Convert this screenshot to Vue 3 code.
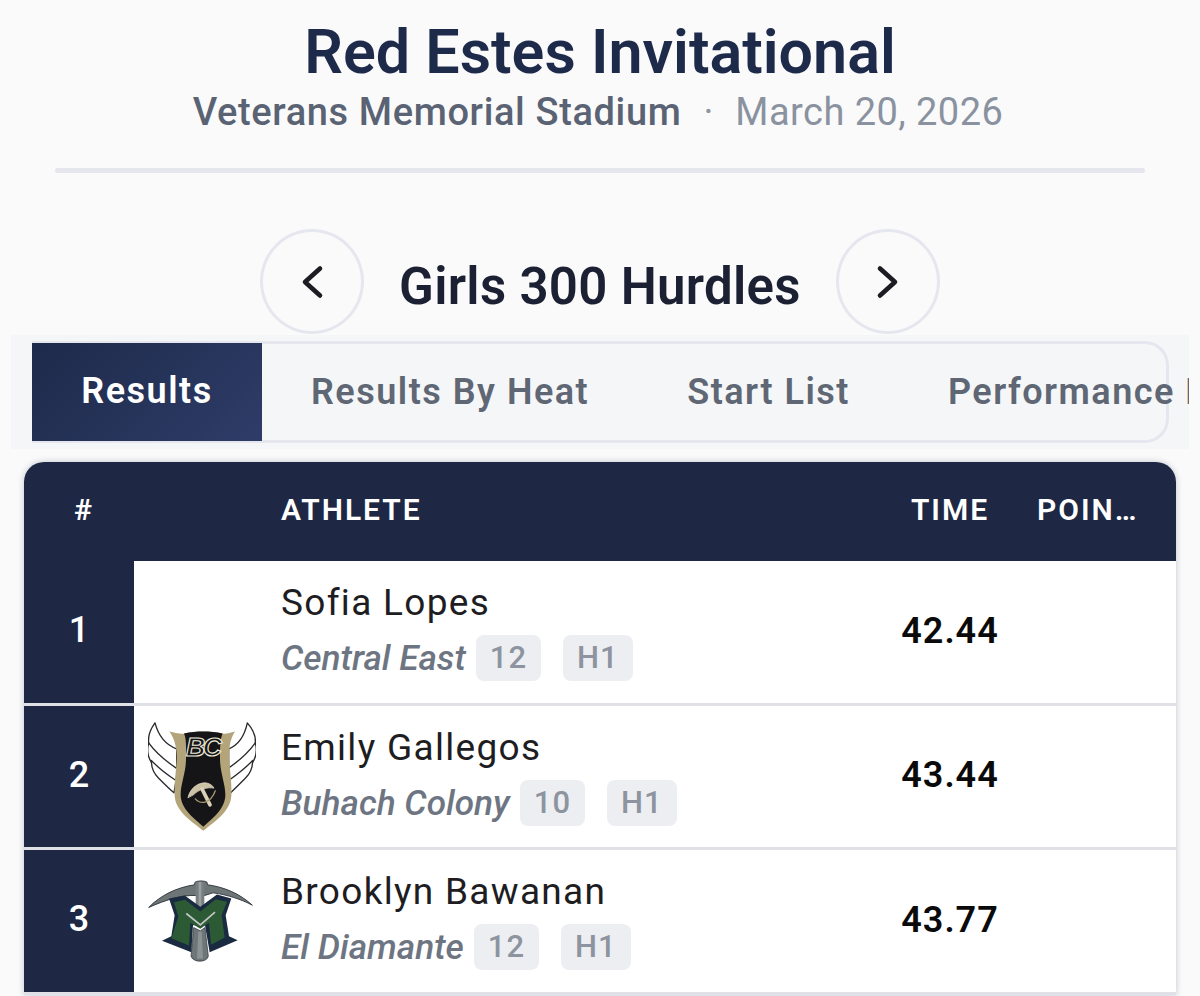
<script setup>
const tabs = ['Results', 'Results By Heat', 'Start List', 'Performance List']
const rows = [
  { rank: 1, name: 'Sofia Lopes', school: 'Central East', grade: 12, heat: 'H1', time: '42.44', logo: '' },
  { rank: 2, name: 'Emily Gallegos', school: 'Buhach Colony', grade: 10, heat: 'H1', time: '43.44', logo: 'bc' },
  { rank: 3, name: 'Brooklyn Bawanan', school: 'El Diamante', grade: 12, heat: 'H1', time: '43.77', logo: 'ed' },
]
</script>

<template>
  <div class="page">
    <header class="head">
      <h1 class="title">Red Estes Invitational</h1>
      <div class="sub">
        <span class="venue">Veterans Memorial Stadium</span>
        <span class="dot">·</span>
        <span class="date">March 20, 2026</span>
      </div>
    </header>
    <div class="rule"></div>

    <div class="event">
      <button class="nav" aria-label="Previous">
        <svg width="40" height="40" viewBox="0 0 40 40" fill="none" stroke="#1c1c22" stroke-width="4.6" stroke-linecap="round" stroke-linejoin="round"><path d="M28 6.5 L13 20 L28 33.5"/></svg>
      </button>
      <h2 class="event-name">Girls 300 Hurdles</h2>
      <button class="nav" aria-label="Next">
        <svg width="40" height="40" viewBox="0 0 40 40" fill="none" stroke="#1c1c22" stroke-width="4.6" stroke-linecap="round" stroke-linejoin="round"><path d="M12 6.5 L27 20 L12 33.5"/></svg>
      </button>
    </div>

    <div class="strip">
      <div class="tabs">
        <div v-for="(t, i) in tabs" :key="t" class="tab" :class="{ active: i === 0 }">{{ t }}</div>
      </div>
    </div>

    <section class="table">
      <div class="thead">
        <div class="th-rank">#</div>
        <div class="th-athlete">ATHLETE</div>
        <div class="th-time">TIME</div>
        <div class="th-points">POIN…</div>
      </div>
      <div v-for="r in rows" :key="r.rank" class="row">
        <div class="rank">{{ r.rank }}</div>
        <div class="logo">
          <svg v-if="r.logo === 'bc'" width="108" height="109" viewBox="54 50 324 326">
            <g fill="#fff" stroke="#2a2a2e" stroke-width="4" stroke-linejoin="round">
              <path d="M75 52 C58 75 52 100 58 122 C78 150 110 178 140 200 L140 130 C108 118 85 90 75 52 Z"/>
              <path d="M56 112 C50 135 54 155 64 170 C85 190 112 212 138 230 L142 190 C112 170 80 145 56 112 Z"/>
              <path d="M64 165 C64 185 72 205 86 218 C100 232 118 250 132 262 L138 225 C112 208 86 188 64 165 Z"/>
              <path d="M352 52 C372 75 380 100 374 122 C354 150 322 178 296 200 L296 130 C326 118 344 90 352 52 Z"/>
              <path d="M376 112 C382 135 378 155 368 170 C347 190 320 212 298 230 L292 190 C322 170 352 145 376 112 Z"/>
              <path d="M368 165 C368 185 360 205 346 218 C332 232 314 250 302 262 L296 225 C320 208 346 188 368 165 Z"/>
            </g>
            <path d="M118 78 C135 82 150 86 164 84 C200 76 240 76 276 84 C290 86 300 82 315 78 C300 100 296 130 298 165 C300 200 306 235 304 270 C302 320 250 350 220 376 C190 350 136 320 134 270 C132 235 138 200 140 165 C142 130 134 100 118 78 Z" fill="#b3a479"/>
            <path d="M162 84 C200 76 240 76 278 84 C270 100 270 130 270 160 C270 200 286 235 286 268 C286 312 245 340 220 364 C195 340 152 312 152 268 C152 235 168 200 168 160 C168 130 170 100 162 84 Z" fill="#151518"/>
            <text x="218" y="150" text-anchor="middle" class="bc-text">BC</text>
            <g fill="none" stroke-linecap="round" stroke-linejoin="round">
              <path d="M174 276 C180 250 200 234 222 232 C238 232 248 240 252 248 C232 244 206 252 190 268 Z" fill="#cbc2a4" stroke="#e8e3cf" stroke-width="2"/>
              <path d="M216 250 L240 298" stroke="#d8d1b8" stroke-width="11"/>
              <path d="M196 280 C210 296 240 298 256 256" stroke="#a89a70" stroke-width="4"/>
            </g>
          </svg>
          <svg v-else-if="r.logo === 'ed'" width="105" height="82" viewBox="55 90 315 245">
            <path d="M57 172 C92 136 140 112 194 104 L196 96 C204 91 224 91 232 96 L234 104 C282 110 330 130 368 165 C335 148 295 134 250 128 L225 136 L198 136 C160 134 110 148 57 172 Z" fill="#6e7577" stroke="#232a30" stroke-width="2.5"/>
            <rect x="198" y="95" width="26" height="85" fill="#777e80"/>
            <rect x="207" y="95" width="8" height="85" fill="#9aa0a1"/>
            <path d="M118 145 L165 136 L212 170 L262 133 L305 145 L288 195 L298 258 L324 270 L240 306 L226 225 L190 225 L185 306 L97 272 L125 258 L135 195 Z" fill="#1a2a40"/>
            <path d="M133 156 L166 149 L212 184 L258 147 L292 155 L276 195 L285 262 L244 284 L238 218 L212 236 L182 218 L178 286 L125 264 L146 200 Z" fill="#2c5a35"/>
            <path d="M170 190 L212 224 L256 186" fill="none" stroke="#c3c7c7" stroke-width="5"/>
            <path d="M192 232 L212 242 L226 232 L236 318 C232 338 190 338 184 318 Z" fill="#6f7678" stroke="#262d33" stroke-width="2"/>
            <path d="M206 244 L216 244 L220 325 L202 325 Z" fill="#8d9394"/>
          </svg>
        </div>
        <div class="athlete">
          <div class="name">{{ r.name }}</div>
          <div class="meta">
            <span class="school">{{ r.school }}</span>
            <span class="chip">{{ r.grade }}</span>
            <span class="chip">{{ r.heat }}</span>
          </div>
        </div>
        <div class="time">{{ r.time }}</div>
      </div>
    </section>
  </div>
</template>

<style>
html, body { margin: 0; background: #fafafb; }
</style>

<style scoped>
.page {
  width: 1200px;
  height: 996px;
  overflow: hidden;
  background: #fafafb;
  font-family: Roboto, "Liberation Sans", sans-serif;
  box-sizing: border-box;
  padding-top: 20px;
}
.head { text-align: center; }
.title {
  margin: 0;
  font-size: 61px;
  line-height: 64px;
  font-weight: 600;
  color: #1e2a4a;
}
.sub {
  margin-top: 7px;
  padding-right: 4px;
  font-size: 38px;
  line-height: 42px;
  display: flex;
  justify-content: center;
  gap: 22px;
}
.venue { color: #5a6373; font-weight: 500; letter-spacing: .63px; }
.dot { color: #8d95a3; }
.date { color: #8a92a0; letter-spacing: .45px; }
.rule {
  height: 5px;
  margin: 35px 55px 0;
  background: #e6e7ee;
  border-radius: 2px;
}
.event {
  margin-top: 55px;
  height: 107px;
  display: flex;
  align-items: center;
  justify-content: center;
  gap: 35px;
}
.nav {
  width: 104px;
  height: 105px;
  padding: 0;
  border: 3px solid #e6e7ee;
  border-radius: 50%;
  background: #fafafb;
  display: flex;
  align-items: center;
  justify-content: center;
  box-sizing: border-box;
}
.event-name {
  margin: 9px 0 0;
  font-size: 51px;
  font-weight: 600;
  color: #1c2033;
  letter-spacing: .3px;
}
.strip {
  margin: 0 11px;
  height: 114px;
  background: #f5f6f8;
  padding: 6px 0 0 21px;
  box-sizing: border-box;
  overflow: hidden;
}
.tabs {
  width: 1137px;
  height: 102px;
  box-sizing: border-box;
  display: flex;
  border: 3px solid #e6e7ee;
  border-left: 0;
  border-radius: 0 24px 24px 0;
  white-space: nowrap;
}
.tab {
  flex: none;
  padding: 0 49px;
  line-height: 97px;
  font-size: 36px;
  font-weight: 600;
  color: #5f6775;
  letter-spacing: 1.5px;
}
.tab.active {
  width: 230px;
  box-sizing: border-box;
  padding: 0;
  text-align: center;
  color: #fff;
  margin: -1px 0;
  height: 98px;
  background: linear-gradient(135deg, #1e2a4a, #2e3c68);
}
.table {
  margin: 13px 24px 0;
  border-radius: 20px 20px 0 0;
  background: #fff;
  box-shadow: 0 0 6px rgba(30, 42, 74, .25);
}
.thead {
  height: 99px;
  padding-bottom: 4px;
  box-sizing: border-box;
  background: #1e2744;
  border-radius: 20px 20px 0 0;
  color: #fff;
  display: flex;
  align-items: center;
  font-size: 30px;
  font-weight: 600;
  letter-spacing: 2px;
}
.th-rank { width: 120px; text-align: center; }
.th-athlete { margin-left: 137px; flex: 1; }
.th-time { width: 130px; text-align: center; margin-right: 22px; }
.th-points { width: 120px; margin-right: 19px; }
.row {
  height: 144.6px;
  box-sizing: border-box;
  display: flex;
  align-items: stretch;
  border-bottom: 3px solid #dfe1e6;
  background: #fff;
}
.rank {
  width: 110px;
  flex: none;
  background: #1e2744;
  color: #fff;
  font-size: 36px;
  font-weight: 500;
  padding-bottom: 3px;
  box-sizing: border-box;
  display: flex;
  align-items: center;
  justify-content: center;
}
.logo {
  width: 147px;
  flex: none;
  padding-left: 14px;
  box-sizing: border-box;
  display: flex;
  align-items: center;
}
.bc-text {
  font-family: "Liberation Sans", sans-serif;
  font-size: 80px;
  font-style: italic;
  font-weight: 700;
  letter-spacing: -8px;
  fill: #151518;
  stroke: #efeadb;
  stroke-width: 3.5;
}
.athlete {
  flex: 1;
  padding-top: 19px;
}
.name {
  font-size: 37px;
  line-height: 46px;
  color: #1d1d22;
  letter-spacing: 1.3px;
}
.meta {
  margin-top: 9px;
  display: flex;
  align-items: center;
  gap: 22px;
}
.school {
  font-size: 35.2px;
  font-style: italic;
  font-weight: 500;
  color: #6e7582;
  margin-right: -12px;
}
.chip {
  height: 46px;
  line-height: 46px;
  padding: 0 14px;
  font-size: 31px;
  font-weight: 500;
  color: #8d94a0;
  background: #eceef1;
  border-radius: 8px;
  letter-spacing: 1px;
}
.time {
  width: 130px;
  margin-right: 161px;
  padding-bottom: 2px;
  text-align: center;
  align-self: center;
  font-size: 36px;
  font-weight: 600;
  color: #0a0a0a;
  letter-spacing: 1px;
}
</style>
